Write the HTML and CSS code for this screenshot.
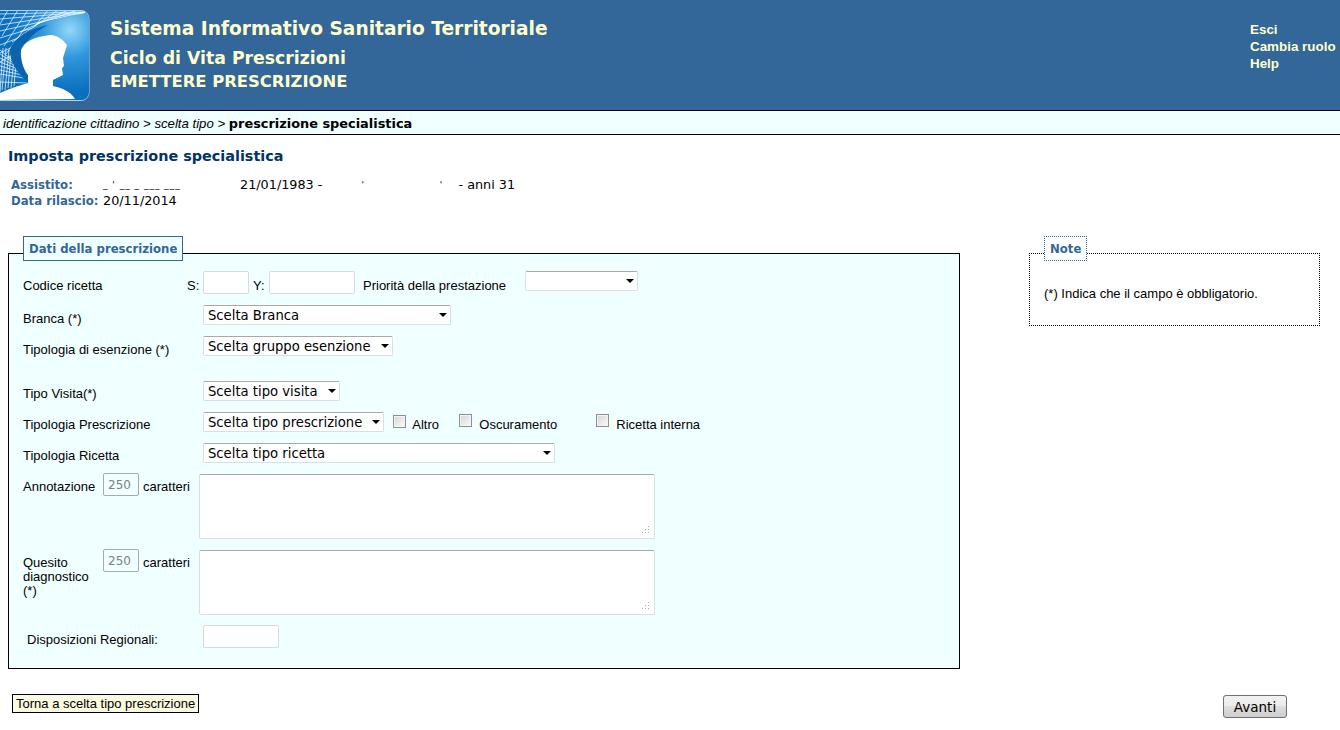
FILE: index.html
```html
<!DOCTYPE html>
<html lang="it">
<head>
    <meta charset="UTF-8">
    <title>Sistema Informativo Sanitario Territoriale</title>
    <link rel="stylesheet" href="styles.css">
</head>
<body>
    <div class="header">
        <svg class="logo" width="90" height="110" viewBox="0 0 90 110">
            <defs>
                <radialGradient id="logo-bg" gradientUnits="userSpaceOnUse" cx="70" cy="30" r="62">
                    <stop offset="0" stop-color="#93d8fa"/>
                    <stop offset="0.45" stop-color="#2f97dc"/>
                    <stop offset="1" stop-color="#0a6fbe"/>
                </radialGradient>
                <clipPath id="logo-clip"><rect x="-8" y="11" width="97" height="89" rx="8"/></clipPath>
            </defs>
            <rect x="-8" y="10.5" width="97" height="90" rx="8" fill="url(#logo-bg)" stroke="#a9d6f2"/>
            <g clip-path="url(#logo-clip)">
                <g stroke="#fff" stroke-width="0.7" fill="none">
                    <path d="M85 12L0 14M85 12L0 19M85 12L0 25M85 12L0 31M85 12L0 38M85 12L0 45M85 12L0 53M85 12L0 62"/>
                    <path d="M8 10L0 24M18 10L2 36M28 10L4 46M38 10L6 54M48 10L8 60M58 10L12 42M68 10L20 32M78 10L36 24"/>
                    <path d="M0 50L12 60M0 54L14 63M0 58L16 66M0 62L18 69M0 66L20 72M0 70L22 75M0 74L24 78M0 82L28 83M3 48L0 92M6 48L2 90M9 50L5 90M11 52L8 88M14 58L11 88M16 64L14 86"/>
                </g>
                <path d="M90 13C52 17 22 28 12 48C8 60 16 72 32 88L32 100L90 100Z" fill="url(#logo-bg)"/>
                <path d="M48 25C30 29 14 37 10 50C9 60 18 72 30 84C24 70 19 58 24 46C29 37 38 30 48 25Z" fill="#0b62ad"/>
                <path d="M21 50C24 42 33 37 50 35C58 35 64 41 67 45L63 58L64 66L62 68L63 75L57 78L53 80L53 86C60 88 70 90 75 99L0 100L0 93C13 87 22 85 28 83L28 75C24 70 20 60 21 50Z" fill="#fff"/>
            </g>
        </svg>
        <div class="titles">
            <div class="title-main">Sistema Informativo Sanitario Territoriale</div>
            <div class="title-sub">Ciclo di Vita Prescrizioni</div>
            <div class="title-page">EMETTERE PRESCRIZIONE</div>
        </div>
        <ul class="top-links">
            <li>Esci</li>
            <li>Cambia ruolo</li>
            <li>Help</li>
        </ul>
    </div>
    <div class="crumbs"><i>identificazione cittadino &gt; scelta tipo &gt;</i> <b>prescrizione specialistica</b></div>

    <h1 class="page-title">Imposta prescrizione specialistica</h1>
    <div class="patient">
        <div class="patient-row">
            <span class="patient-label">Assistito:</span>
            <span class="hidden-name">_ ' __ _ ___ ___</span>
            <span>21/01/1983 -</span>
            <span class="hidden-place">' '</span>
            <span>- anni 31</span>
        </div>
        <div class="patient-row">
            <span class="patient-label">Data rilascio:</span>
            <span>20/11/2014</span>
        </div>
    </div>

    <div class="columns">
        <div class="box box-main">
            <div class="box-title">Dati della prescrizione</div>
            <form class="rows">
                <div class="row row-tall">
                    <label class="lbl lbl-code">Codice ricetta</label>
                    <span class="lbl lbl-s">S:</span>
                    <input class="txt txt-s" type="text">
                    <span class="lbl lbl-y">Y:</span>
                    <input class="txt txt-y" type="text">
                    <span class="lbl lbl-prio">Priorità della prestazione</span>
                    <span class="sel sel-prio"></span>
                </div>
                <div class="row row-low">
                    <label class="lbl lbl-col">Branca (*)</label>
                    <span class="sel sel-branca">Scelta Branca</span>
                </div>
                <div class="row row-low">
                    <label class="lbl lbl-col">Tipologia di esenzione (*)</label>
                    <span class="sel">Scelta gruppo esenzione</span>
                </div>
                <div class="row row-spaced">
                    <label class="lbl lbl-col">Tipo Visita(*)</label>
                    <span class="sel">Scelta tipo visita</span>
                </div>
                <div class="row">
                    <label class="lbl lbl-col">Tipologia Prescrizione</label>
                    <span class="sel">Scelta tipo prescrizione</span>
                    <input class="chk chk-altro" type="checkbox">
                    <span class="lbl lbl-altro">Altro</span>
                    <input class="chk" type="checkbox">
                    <span class="lbl lbl-oscur">Oscuramento</span>
                    <input class="chk" type="checkbox">
                    <span class="lbl lbl-ric">Ricetta interna</span>
                </div>
                <div class="row">
                    <label class="lbl lbl-col">Tipologia Ricetta</label>
                    <span class="sel sel-ricetta">Scelta tipo ricetta</span>
                </div>
                <div class="row row-tall">
                    <label class="lbl lbl-note">Annotazione</label>
                    <input class="txt txt-count" type="text" value="250" disabled>
                    <span class="lbl lbl-chars">caratteri</span>
                    <textarea class="area"></textarea>
                </div>
                <div class="row row-tall">
                    <label class="lbl lbl-note">Quesito diagnostico (*)</label>
                    <input class="txt txt-count" type="text" value="250" disabled>
                    <span class="lbl lbl-chars">caratteri</span>
                    <textarea class="area"></textarea>
                </div>
                <div class="row row-tall row-last">
                    <label class="lbl lbl-col lbl-disp">Disposizioni Regionali:</label>
                    <input class="txt txt-disp" type="text">
                </div>
            </form>
        </div>
        <div class="box box-note">
            <div class="box-title">Note</div>
            <p class="note-text">(*) Indica che il campo è obbligatorio.</p>
        </div>
    </div>

    <div class="actions">
        <a class="back-link">Torna a scelta tipo prescrizione</a>
        <button class="btn-next" type="button">Avanti</button>
    </div>
</body>
</html>
```

FILE: styles.css
```css
body {
    margin: 0;
    font-family: "Liberation Sans", Arial, sans-serif;
    font-size: 13px;
    color: #000;
    background: #fff;
}

.header {
    display: flex;
    height: 110px;
    background-color: #336699;
    border-bottom: 1px solid #000;
    color: #ffffcc;
    font-family: "DejaVu Sans", Verdana, sans-serif;
    font-weight: bold;
}
.logo {
    flex: none;
    margin-right: 20px;
}
.titles {
    flex: 1;
    padding-top: 18px;
}
.title-main {
    font-size: 18.6px;
    line-height: 22px;
}
.title-sub {
    margin-top: 8px;
    font-size: 17.3px;
    line-height: 20px;
}
.title-page {
    margin-top: 4px;
    font-size: 16.4px;
    line-height: 20px;
}
.top-links {
    list-style: none;
    margin: 0;
    padding: 21px 3px 0 0;
    width: 87px;
    font-family: "Liberation Sans", Arial, sans-serif;
    font-size: 13.4px;
    line-height: 17px;
}

.crumbs {
    height: 23px;
    line-height: 25px;
    padding-left: 3px;
    background-color: #f0ffff;
    border-bottom: 1px solid #000;
    font-size: 13.2px;
}
.crumbs b {
    font-family: "DejaVu Sans", Verdana, sans-serif;
    font-size: 12.9px;
}

.page-title {
    margin: 12px 0 0 8px;
    font-family: "DejaVu Sans", Verdana, sans-serif;
    font-size: 14.4px;
    line-height: 18px;
    color: #003366;
}

.patient {
    margin: 12px 0 0 11px;
    font-family: "DejaVu Sans", Verdana, sans-serif;
    font-size: 12.8px;
    line-height: 16px;
}
.patient-row {
    display: flex;
}
.patient-label {
    width: 92px;
    font-size: 11.7px;
    font-weight: bold;
    color: #336699;
}
.hidden-name {
    width: 137px;
    font-size: 9px;
    letter-spacing: 1px;
}
.hidden-place {
    width: 136px;
    padding-left: 39px;
    box-sizing: border-box;
    font-size: 9px;
    word-spacing: 73px;
}

.columns {
    display: flex;
    align-items: flex-start;
    margin: 44px 0 0 8px;
}
.box {
    box-sizing: border-box;
}
.box-main {
    width: 952px;
    height: 416px;
    padding: 0 14px;
    border: 1px solid #000;
    background-color: #f0ffff;
}
.box-note {
    width: 291px;
    height: 73px;
    margin-left: 69px;
    padding: 0 14px;
    border: 1px dotted #000;
}
.box-title {
    box-sizing: border-box;
    width: fit-content;
    height: 25px;
    margin-top: -18px;
    padding: 0 5px;
    border: 1px solid #336699;
    background-color: #f0ffff;
    font-family: "DejaVu Sans", Verdana, sans-serif;
    font-size: 11.7px;
    font-weight: bold;
    line-height: 25px;
    color: #336699;
}
.box-note .box-title {
    border-style: dotted;
    background-color: #fff;
}
.note-text {
    margin: 25px 0 0;
}

.rows {
    display: flex;
    flex-direction: column;
    gap: 11px;
    margin-top: 10px;
}
.row {
    display: flex;
    align-items: flex-start;
    height: 20px;
}
.row-tall {
    height: auto;
}
.row-spaced {
    margin-top: 14px;
}
.row-last {
    margin-top: -1px;
}
.lbl {
    padding-top: 6px;
    line-height: 14px;
}
.row-low .lbl {
    padding-top: 7px;
}
.row-tall .lbl {
    padding-top: 8px;
}
.lbl-code {
    width: 164px;
}
.lbl-s {
    width: 16px;
}
.lbl-y {
    margin-left: 4px;
    width: 16px;
}
.lbl-prio {
    margin-left: 8px;
    width: 162px;
}
.lbl-col {
    width: 180px;
}
.lbl-disp {
    padding-left: 4px;
    box-sizing: border-box;
}
.row-tall .lbl-note {
    width: 80px;
    padding-top: 6px;
}
.row-tall .lbl-chars {
    width: 56px;
    margin-left: 4px;
    padding-top: 6px;
}
.lbl-altro {
    width: 47px;
}
.lbl-oscur {
    width: 117px;
}

.txt {
    box-sizing: border-box;
    height: 23px;
    padding: 0 4px;
    border: 1px solid #d5dbdf;
    border-radius: 2px;
    background: #fff;
}
.txt-s {
    width: 46px;
}
.txt-y {
    width: 86px;
}
.txt-disp {
    width: 76px;
}
.txt-count {
    width: 36px;
    margin-top: -1px;
    border-color: #a9a9a9;
    font-family: "DejaVu Sans", Verdana, sans-serif;
    font-size: 12px;
    color: #808080;
    background: transparent;
}

.sel {
    position: relative;
    box-sizing: border-box;
    display: block;
    height: 20px;
    padding: 0 21px 0 4px;
    border: 1px solid #d9e0e4;
    border-top-color: #a9a9a9;
    border-radius: 2px;
    background: #fff;
    font-family: "DejaVu Sans", Verdana, sans-serif;
    font-size: 13.2px;
    line-height: 20px;
    white-space: nowrap;
}
.sel::after {
    content: "";
    position: absolute;
    right: 3px;
    top: 7px;
    border: 4px solid transparent;
    border-bottom: 0;
    border-top-color: #000;
}
.sel-prio {
    width: 113px;
}
.sel-branca {
    width: 248px;
}
.sel-ricetta {
    width: 352px;
}

.chk {
    appearance: none;
    box-sizing: border-box;
    width: 13px;
    height: 13px;
    margin: 2px 6px 0 9px;
    border: 1px solid #8e8f8f;
    background: linear-gradient(135deg, #d4d4d4, #fbfbfb);
    box-shadow: inset 0 0 0 1px #f4f4f4;
}
.chk-altro {
    margin-top: 3px;
}
.lbl-altro + .chk,
.lbl-oscur + .chk {
    margin-left: 0;
    margin-right: 7px;
}

.area {
    box-sizing: border-box;
    width: 456px;
    height: 65px;
    margin: 0;
    padding: 2px;
    border: 1px solid #d9e0e4;
    border-top-color: #a9a9a9;
    border-radius: 2px;
    background: #fff;
}
.area::-webkit-resizer {
    background:
        linear-gradient(#a8a8a8, #a8a8a8) 9px 3px / 1px 1px no-repeat,
        linear-gradient(#a8a8a8, #a8a8a8) 9px 6px / 1px 1px no-repeat,
        linear-gradient(#a8a8a8, #a8a8a8) 9px 9px / 1px 1px no-repeat,
        linear-gradient(#a8a8a8, #a8a8a8) 6px 6px / 1px 1px no-repeat,
        linear-gradient(#a8a8a8, #a8a8a8) 6px 9px / 1px 1px no-repeat,
        linear-gradient(#a8a8a8, #a8a8a8) 3px 9px / 1px 1px no-repeat;
}

.actions {
    display: flex;
    justify-content: space-between;
    align-items: flex-start;
    padding: 25px 53px 0 12px;
}
.back-link {
    height: 19px;
    box-sizing: border-box;
    padding: 0 3px;
    border: 1px solid #000;
    background-color: #fafae0;
    line-height: 18px;
}
.btn-next {
    width: 64px;
    height: 23px;
    margin-top: 1px;
    padding: 0;
    border: 1px solid #707070;
    border-radius: 3px;
    background: linear-gradient(#f2f2f2 0%, #ebebeb 49%, #dddddd 50%, #cfcfcf 100%);
    font-family: "DejaVu Sans", Verdana, sans-serif;
    font-size: 13.5px;
    color: #000;
}
```
